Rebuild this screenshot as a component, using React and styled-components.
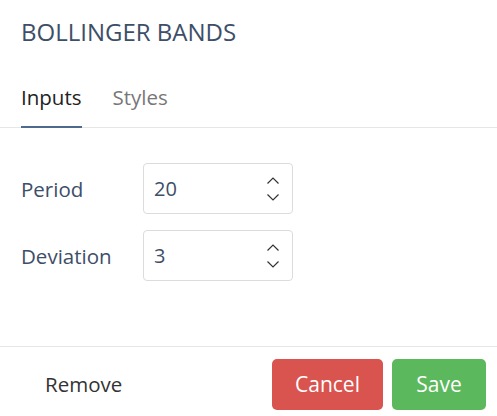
import styled, { createGlobalStyle } from 'styled-components';

const GlobalStyle = createGlobalStyle`
  html, body {
    margin: 0;
    padding: 0;
    background: #fff;
  }
  body {
    font-family: 'Open Sans', 'Liberation Sans', sans-serif;
  }
`;

const Dialog = styled.div`
  width: 497px;
  height: 416px;
  display: flex;
  flex-direction: column;
  background: #fff;
`;

const Title = styled.h2`
  margin: 0;
  padding: 15px 21px 0;
  height: 47px;
  box-sizing: border-box;
  font-size: 24px;
  font-weight: 400;
  color: #3d4e68;
  white-space: nowrap;
`;

const Tabs = styled.div`
  display: flex;
  gap: 31px;
  padding: 0 21px;
  border-bottom: 1px solid #e6e6e6;
  height: 81px;
  box-sizing: border-box;
  align-items: flex-end;
`;

const Tab = styled.div`
  font-size: 20.5px;
  color: ${(p) => (p.$active ? '#222' : '#777')};
  padding-bottom: 15px;
  line-height: 27px;
  border-bottom: 2px solid ${(p) => (p.$active ? '#4d6b8c' : 'transparent')};
  margin-bottom: -1px;
`;

const Body = styled.div`
  flex: 1;
  padding: 35px 0 0 21px;
  display: flex;
  flex-direction: column;
  gap: 16px;
`;

const Row = styled.div`
  display: flex;
  align-items: center;
`;

const Label = styled.label`
  width: 122px;
  font-size: 20.5px;
  color: #3d4e68;
`;

const NumberBox = styled.div`
  width: 150px;
  height: 51px;
  box-sizing: border-box;
  border: 1px solid #dcdcdc;
  border-radius: 4px;
  display: flex;
  align-items: center;
  justify-content: space-between;
  padding: 0 13px 0 10px;
  font-size: 20px;
  color: #3d4e68;
`;

const Spinner = styled.div`
  display: flex;
  flex-direction: column;
  gap: 10px;
  margin-top: 1px;
`;

const Footer = styled.div`
  border-top: 1px solid #e6e6e6;
  height: 70px;
  box-sizing: border-box;
  display: flex;
  align-items: center;
  padding: 5px 11px 0 45px;
  gap: 9px;
`;

const Remove = styled.span`
  font-size: 20.5px;
  color: #333;
  margin-right: auto;
`;

const Button = styled.button`
  width: ${(p) => p.$width}px;
  height: 51px;
  border: none;
  border-radius: 5px;
  color: #fff;
  font-family: inherit;
  font-size: 21px;
  padding: 0;
  background: ${(p) => p.$bg};
`;

function Chevron({ up }) {
  return (
    <svg width="12" height="7" viewBox="0 0 12 7" fill="none">
      <path
        d={up ? 'M0.5 6.5 L6 1 L11.5 6.5' : 'M0.5 0.5 L6 6 L11.5 0.5'}
        stroke="#333"
        strokeWidth="1.2"
      />
    </svg>
  );
}

function NumberField({ value }) {
  return (
    <NumberBox>
      <span>{value}</span>
      <Spinner>
        <Chevron up />
        <Chevron />
      </Spinner>
    </NumberBox>
  );
}

export default function App() {
  return (
    <>
      <GlobalStyle />
      <Dialog>
        <Title>BOLLINGER BANDS</Title>
        <Tabs>
          <Tab $active>Inputs</Tab>
          <Tab>Styles</Tab>
        </Tabs>
        <Body>
          <Row>
            <Label>Period</Label>
            <NumberField value="20" />
          </Row>
          <Row>
            <Label>Deviation</Label>
            <NumberField value="3" />
          </Row>
        </Body>
        <Footer>
          <Remove>Remove</Remove>
          <Button $bg="#d9534f" $width={111}>Cancel</Button>
          <Button $bg="#5cb85c" $width={94}>Save</Button>
        </Footer>
      </Dialog>
    </>
  );
}
